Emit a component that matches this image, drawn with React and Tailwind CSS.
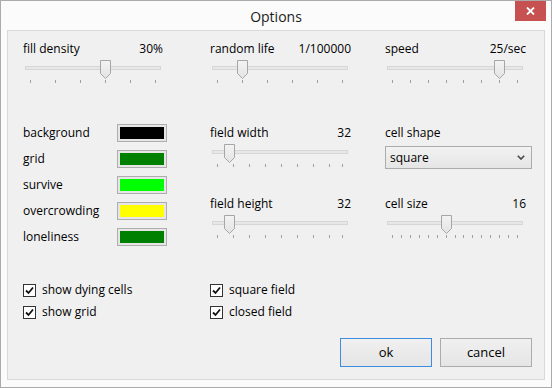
import React from 'react';

const font = "font-['Segoe_UI','Open_Sans',sans-serif]";

const Thumb = () => (
  <svg width="11" height="19" viewBox="0 0 11 19">
    <defs>
      <linearGradient id="thumbFill" x1="0" y1="0" x2="0" y2="1">
        <stop offset="0" stopColor="#f3f3f3" />
        <stop offset="1" stopColor="#e3e3e3" />
      </linearGradient>
    </defs>
    <path d="M0.5 0.5H10.5V13.5L5.5 18.5L0.5 13.5Z" fill="url(#thumbFill)" stroke="#a6a6a6" />
  </svg>
);

const Slider = ({ pos, ticks }) => (
  <div className="relative h-[28px] mt-[2px]">
    <div className="absolute left-[2px] top-[6px] w-[136px] h-[4px] border border-[#d6d6d6] bg-[#e7e7e7]" />
    {ticks.map((t, i) => (
      <div
        key={i}
        className="absolute top-[20px] w-[1px] h-[3px] bg-[#a0a0a0]"
        style={{ left: Math.round(7 + t * 125) }}
      />
    ))}
    <div className="absolute top-0" style={{ left: Math.round(2 + pos * 125) }}>
      <Thumb />
    </div>
  </div>
);

const even = (n) => Array.from({ length: n }, (_, i) => i / (n - 1));
const fieldTicks = [...Array.from({ length: 8 }, (_, i) => i * 0.128), 1];

const SliderField = ({ label, value, pos, ticks, className = '' }) => (
  <div className={className}>
    <div className="flex justify-between h-[18px] leading-[18px]">
      <span>{label}</span>
      <span className="pr-[1px]">{value}</span>
    </div>
    <Slider pos={pos} ticks={ticks} />
  </div>
);

const Swatch = ({ label, color }) => (
  <div className="flex items-center justify-between h-[18px]">
    <span className="leading-[18px]">{label}</span>
    <div className="w-[50px] h-[18px] border border-[#adadad] bg-[#e6e6e6] p-[2px]">
      <div className="w-full h-full" style={{ background: color }} />
    </div>
  </div>
);

const Check = ({ label }) => (
  <label className="flex items-center h-[18px] gap-[6px]">
    <span className="w-[13px] h-[13px] border border-[#333333] bg-white flex items-center justify-center">
      <svg width="9" height="9" viewBox="0 0 9 9">
        <path d="M1 4.5L3.5 7L8 1.5" fill="none" stroke="#111" strokeWidth="1.8" />
      </svg>
    </span>
    <span className="leading-[18px]">{label}</span>
  </label>
);

export default function App() {
  return (
    <div className={`${font} w-[552px] h-[388px] border border-[#ababab] bg-[#fbfbfb] flex flex-col text-[12px] text-black`}>
      {/* Title bar */}
      <div className="relative h-[29px] flex items-center justify-center pt-[2px]">
        <span className="text-[14px] text-[#1a1a1a]">Options</span>
        <button className="absolute right-[5px] top-0 w-[31px] h-[20px] bg-[#c75050] flex items-center justify-center">
          <svg width="9" height="8" viewBox="0 0 9 8">
            <path d="M1 0.5L8 7.5M8 0.5L1 7.5" stroke="#fff" strokeWidth="1.8" />
          </svg>
        </button>
      </div>

      {/* Content */}
      <div className="mx-[6px] h-[350px] border border-[#dadada] bg-[#f0f0f0] flex flex-col pl-[15px]">
        {/* Top sliders */}
        <div className="flex mt-[9px]">
          <SliderField className="w-[141px]" label="fill density" value="30%" pos={0.6} ticks={even(6)} />
          <SliderField className="w-[142px] ml-[46px]" label="random life" value="1/100000" pos={0.2} ticks={even(6)} />
          <SliderField className="w-[142px] ml-[33px]" label="speed" value="25/sec" pos={6 / 7} ticks={even(8)} />
        </div>

        {/* Middle */}
        <div className="flex mt-[36px]">
          <div className="w-[144px] flex flex-col gap-[8px]">
            <Swatch label="background" color="#000000" />
            <Swatch label="grid" color="#008000" />
            <Swatch label="survive" color="#00ff00" />
            <Swatch label="overcrowding" color="#ffff00" />
            <Swatch label="loneliness" color="#008000" />
          </div>
          <div className="w-[142px] ml-[43px]">
            <SliderField label="field width" value="32" pos={0.096} ticks={fieldTicks} />
            <SliderField className="mt-[23px]" label="field height" value="32" pos={0.096} ticks={fieldTicks} />
          </div>
          <div className="w-[142px] ml-[33px]">
            <div className="h-[18px] leading-[18px]">cell shape</div>
            <div className="mt-[4px] w-[147px] h-[23px] border border-[#acacac] bg-gradient-to-b from-[#f2f2f2] to-[#e5e5e5] flex items-center justify-between pl-[4px] pr-[6px]">
              <span>square</span>
              <svg width="8" height="5" viewBox="0 0 8 5">
                <path d="M0.8 0.8L4 4L7.2 0.8" fill="none" stroke="#444" strokeWidth="1.6" />
              </svg>
            </div>
            <SliderField className="mt-[26px]" label="cell size" value="16" pos={6 / 14} ticks={even(15)} />
          </div>
        </div>

        {/* Checkboxes */}
        <div className="flex mt-[35px]">
          <div className="w-[187px] flex flex-col gap-[4px]">
            <Check label="show dying cells" />
            <Check label="show grid" />
          </div>
          <div className="flex flex-col gap-[4px]">
            <Check label="square field" />
            <Check label="closed field" />
          </div>
        </div>

        {/* Buttons */}
        <div className="flex justify-end gap-[8px] mt-[17px] pr-[12px]">
          <button className="w-[92px] h-[29px] border border-[#3c8ce0] bg-gradient-to-b from-[#f0f0f0] to-[#e5e5e5] text-[13px]">
            ok
          </button>
          <button className="w-[92px] h-[29px] border border-[#acacac] bg-gradient-to-b from-[#f0f0f0] to-[#e5e5e5] text-[13px]">
            cancel
          </button>
        </div>
      </div>
    </div>
  );
}
